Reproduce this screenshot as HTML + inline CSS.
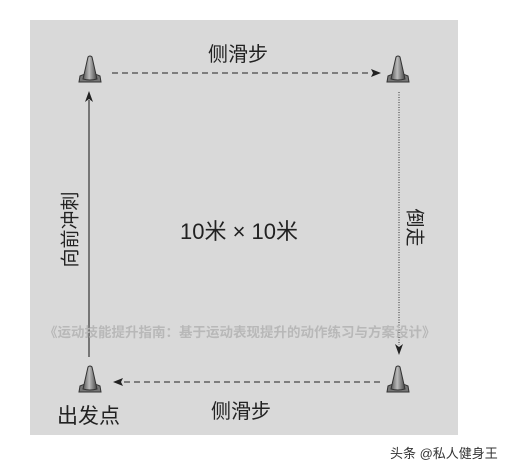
<!DOCTYPE html>
<html><head><meta charset="utf-8"><style>
body{margin:0;width:509px;height:469px;background:#fff;position:relative;overflow:hidden;font-family:"Liberation Sans","Noto Sans CJK SC",sans-serif}
.box{position:absolute;left:30px;top:20px;width:428px;height:415px;background:#d9d9d9}
.t{position:absolute;color:#222;white-space:nowrap}
</style></head><body>
<div class="box"></div>
<svg width="509" height="469" style="position:absolute;left:0;top:0">
<defs>
<linearGradient id="g" x1="0" x2="1"><stop offset="0" stop-color="#555"/><stop offset="0.45" stop-color="#bbb"/><stop offset="1" stop-color="#444"/></linearGradient>
<g id="cone"><path d="M-11 12 L-10 6 Q0 1 10 6 L11 12 Z" fill="#777" stroke="#333" stroke-width="1"/><path d="M-7 9 L-2 -13 Q0 -15 2 -13 L7 9 Q0 11 -7 9Z" fill="url(#g)" stroke="#333" stroke-width="1"/></g>
</defs>
<use href="#cone" x="90" y="70"/><use href="#cone" x="398" y="70"/><use href="#cone" x="90" y="380"/><use href="#cone" x="398" y="380"/>
<line x1="112" y1="73" x2="372" y2="73" stroke="#222" stroke-dasharray="6,4"/>
<path d="M381 73 L371 69 L373 73 L371 77Z" fill="#222"/>
<line x1="124" y1="382" x2="381" y2="382" stroke="#222" stroke-dasharray="6,4"/>
<path d="M113 382 L123 378 L121 382 L123 386Z" fill="#222"/>
<line x1="89" y1="100" x2="89" y2="357" stroke="#555" stroke-width="1.5"/>
<path d="M89 91 L85 102 L89 99 L93 102Z" fill="#222"/>
<line x1="399" y1="92" x2="399" y2="345" stroke="#333" stroke-dasharray="1,1.5"/>
<path d="M399 355 L395 344 L399 347 L403 344Z" fill="#222"/>
</svg>
<div class="t" style="left:208px;top:38px;font-size:20px">侧滑步</div>
<div class="t" style="left:211px;top:395px;font-size:20px">侧滑步</div>
<div class="t" style="left:57px;top:400px;font-size:21px">出发点</div>
<div class="t" style="left:180px;top:214px;font-size:22px">10米 × 10米</div>
<div class="t" style="left:29px;top:216px;font-size:19px;transform:rotate(-90deg);transform-origin:center;width:80px;text-align:center">向前冲刺</div>
<div class="t" style="left:396px;top:214px;font-size:19px;transform:rotate(90deg);width:40px;text-align:center">倒走</div>
<div class="t" style="left:44px;top:321px;font-size:13.5px;font-weight:bold;color:#b8b8b8">《运动技能提升指南：基于运动表现提升的动作练习与方案设计》</div>
<div class="t" style="left:390px;top:443px;font-size:13px;color:#333">头条 @私人健身王</div>
</body></html>
